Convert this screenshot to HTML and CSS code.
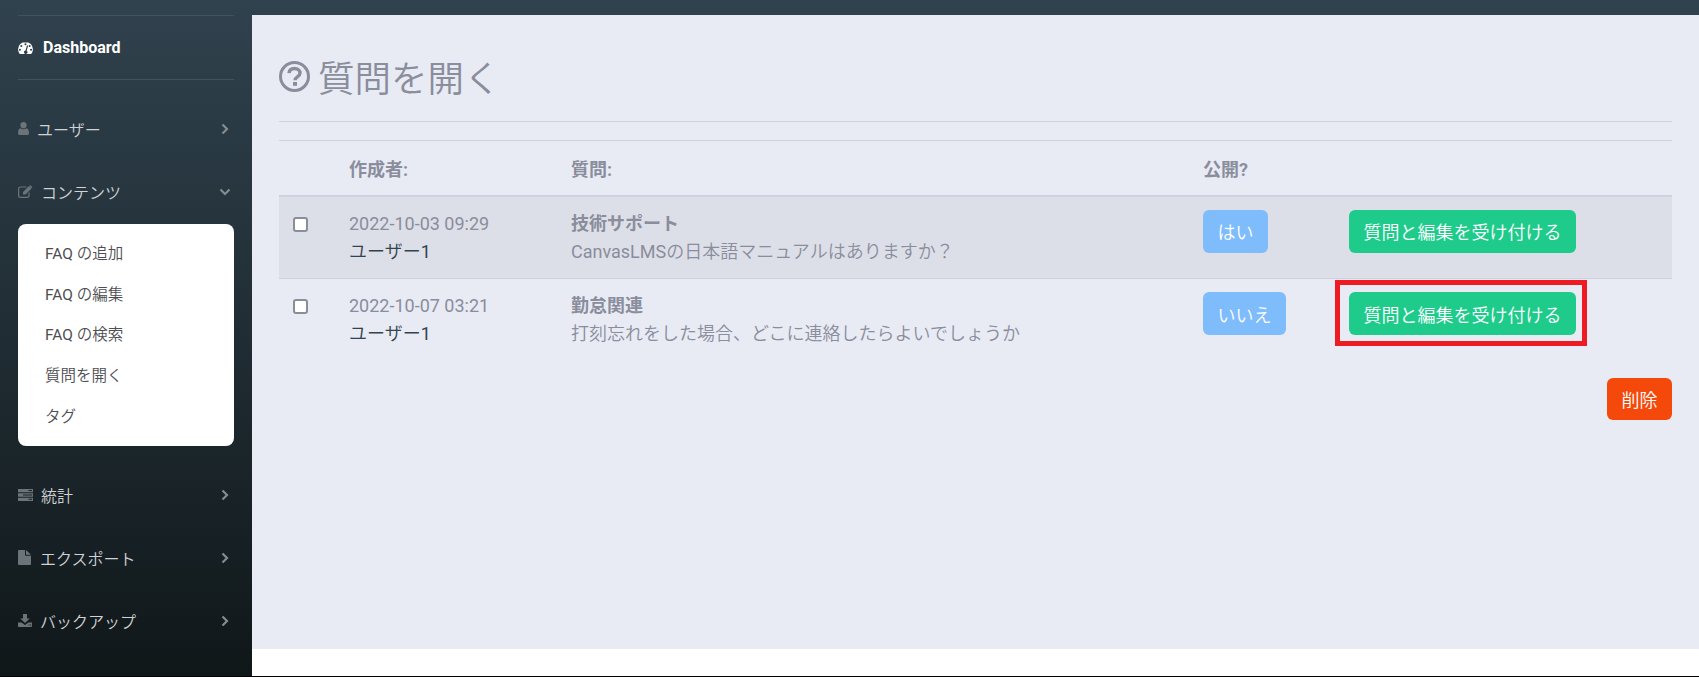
FILE: index.html
```html
<!DOCTYPE html>
<html lang="ja">
<head>
<meta charset="utf-8">
<title>質問を開く</title>
<link rel="stylesheet" href="styles.css">
</head>
<body>
<div class="app">
  <aside class="sidebar">
    <a class="dash">
      <svg class="dash-icon" viewBox="0 0 16 14"><path fill="currentColor" fill-rule="evenodd" d="M8 1a8 8 0 0 0-8 8c0 1.700.5 3.200 1.400 4.500.2.300.5.500.9.500h11.400c.4 0 .7-.2.9-.5.9-1.300 1.400-2.800 1.400-4.500a8 8 0 0 0-8-8zM8 2.300a1.100 1.100 0 1 1 0 2.200 1.100 1.100 0 0 1 0-2.200zM3.500 4.200a1.100 1.100 0 1 1 0 2.200 1.100 1.100 0 0 1 0-2.200zM12.500 4.200a1.100 1.100 0 1 1 0 2.200 1.100 1.100 0 0 1 0-2.200zM2 8.300a1.100 1.100 0 1 1 0 2.200 1.100 1.100 0 0 1 0-2.200zM14 8.300a1.100 1.100 0 1 1 0 2.200 1.100 1.100 0 0 1 0-2.200zM10.800 5l-1.500 5.600a1.800 1.800 0 1 1-1.300-.3L9.600 4.700z"/></svg>
      <span>Dashboard</span>
    </a>
    <nav class="nav">
      <a class="nav-item">
        <svg class="ico ico-user" viewBox="0 0 11 13"><circle cx="5.500" cy="3.200" r="3.100" fill="currentColor"/><path fill="currentColor" d="M0 11.300C0 8.500.8 6.500 2.500 6.200c.8.600 1.900 1 3 1s2.200-.4 3-1C10.200 6.500 11 8.500 11 11.300c0 1-.7 1.700-1.600 1.700H1.600C.7 13 0 12.300 0 11.300z"/></svg>
        <span class="label label-user">ユーザー</span>
        <svg class="chev" viewBox="0 0 8 12"><path d="M1.500 1.500 6 6l-4.500 4.500" fill="none" stroke="currentColor" stroke-width="2.200"/></svg>
      </a>
      <a class="nav-item open">
        <svg class="ico ico-edit" viewBox="0 0 15 13"><path fill="none" stroke="currentColor" stroke-width="1.200" d="M11 7.500v3A1.900 1.900 0 0 1 9.100 12.400H2.500A1.900 1.900 0 0 1 .6 10.500V3.900A1.900 1.900 0 0 1 2.500 2h6"/><path fill="currentColor" d="M5 7 11 1l2.500 2.500-6 6H5zM11.700.4c.3-.3.800-.3 1.100 0l1.300 1.300c.3.300.3.800 0 1.100l-.4.400-2.400-2.400z"/></svg>
        <span class="label">コンテンツ</span>
        <svg class="chev chev-down" viewBox="0 0 12 8"><path d="M1.500 1.500 6 6l4.500-4.500" fill="none" stroke="currentColor" stroke-width="2.200"/></svg>
      </a>
      <ul class="submenu">
        <li>FAQ の追加</li>
        <li>FAQ の編集</li>
        <li>FAQ の検索</li>
        <li>質問を開く</li>
        <li>タグ</li>
      </ul>
      <a class="nav-item">
        <svg class="ico ico-stats" viewBox="0 0 15 12"><path fill="currentColor" fill-rule="evenodd" d="M0 0h15v3.300H0zM10.500 1v1H14V1zM0 4.300h15v3.400H0zM0 8.700h15V12H0zM10.500 9.800v1H14v-1zM5 5.500v1h9v-1z"/></svg>
        <span class="label">統計</span>
        <svg class="chev" viewBox="0 0 8 12"><path d="M1.500 1.500 6 6l-4.500 4.500" fill="none" stroke="currentColor" stroke-width="2.200"/></svg>
      </a>
      <a class="nav-item">
        <svg class="ico ico-file" viewBox="0 0 13 15"><path fill="currentColor" d="M0 .8C0 .4.400 0 .8 0H7v4.700c0 .6.500 1 1 1h5v8.500c0 .4-.4.800-.8.800H.8c-.4 0-.8-.4-.8-.8zM8 0l5 4.800H8z"/></svg>
        <span class="label label-file">エクスポート</span>
        <svg class="chev" viewBox="0 0 8 12"><path d="M1.500 1.500 6 6l-4.500 4.500" fill="none" stroke="currentColor" stroke-width="2.200"/></svg>
      </a>
      <a class="nav-item">
        <svg class="ico ico-dl" viewBox="0 0 14 13"><path fill="currentColor" fill-rule="evenodd" d="M5 0h4v4.500h2.800L7 9 2.200 4.500H5zM0 8.500h3.500L7 11l3.500-2.500H14V12.200c0 .4-.4.800-.8.800H.8c-.4 0-.8-.4-.8-.8zM10.500 10.500v1h1v-1zM12.200 10.500v1h1v-1z"/></svg>
        <span class="label">バックアップ</span>
        <svg class="chev" viewBox="0 0 8 12"><path d="M1.500 1.500 6 6l-4.500 4.500" fill="none" stroke="currentColor" stroke-width="2.200"/></svg>
      </a>
    </nav>
  </aside>
  <div class="right">
    <main class="main">
      <h1 class="title">
        <svg class="title-icon" viewBox="0 0 31 31"><circle cx="15.500" cy="15.500" r="14" fill="none" stroke="currentColor" stroke-width="3"/><path fill="none" stroke="currentColor" stroke-width="3.400" d="M10 12.200c.3-3 2.500-4.700 5.500-4.700 3.200 0 5.500 1.900 5.500 4.500 0 4-5 3.700-5 7.300"/><rect x="14" y="21" width="4" height="3.800" fill="currentColor"/></svg>
        <span>質問を開く</span>
      </h1>
      <table class="table">
        <colgroup>
          <col class="c-check"><col class="c-author"><col class="c-question"><col class="c-public"><col class="c-action">
        </colgroup>
        <thead>
          <tr><th></th><th>作成者:</th><th>質問:</th><th>公開?</th><th></th></tr>
        </thead>
        <tbody>
          <tr class="shaded">
            <td><input class="check" type="checkbox"></td>
            <td><div class="date">2022-10-03 09:29</div><div class="user">ユーザー1</div></td>
            <td><div class="q-title">技術サポート</div><div class="q-body">CanvasLMSの日本語マニュアルはありますか？</div></td>
            <td><button class="btn btn-blue">はい</button></td>
            <td><button class="btn btn-green">質問と編集を受け付ける</button></td>
          </tr>
          <tr>
            <td><input class="check" type="checkbox"></td>
            <td><div class="date">2022-10-07 03:21</div><div class="user">ユーザー1</div></td>
            <td><div class="q-title">勤怠関連</div><div class="q-body">打刻忘れをした場合、どこに連絡したらよいでしょうか</div></td>
            <td><button class="btn btn-blue">いいえ</button></td>
            <td><button class="btn btn-green marked">質問と編集を受け付ける</button></td>
          </tr>
        </tbody>
      </table>
      <div class="actions"><button class="btn btn-red">削除</button></div>
    </main>
    <div class="foot"></div>
  </div>
</div>
</body>
</html>
```
FILE: styles.css
```css
* { box-sizing: border-box; }
html, body { margin: 0; padding: 0; height: 100%; overflow: hidden; }
body { font-family: Roboto, "Noto Sans CJK JP DemiLight", "Noto Sans CJK JP", sans-serif; }
.app {
  display: flex;
  height: 677px;
  border-bottom: 1px solid #000;
  background: linear-gradient(#30424e 0, #101719 100%);
}
.sidebar { width: 252px; flex: none; padding: 15px 18px 0; }
.dash {
  display: flex;
  align-items: center;
  gap: 10px;
  height: 65px;
  border-top: 1px solid #3f525e;
  border-bottom: 1px solid #3f525e;
  color: #fff;
  font-size: 16px;
  font-weight: 700;
}
.dash-icon { width: 15px; height: 13px; }
.nav { display: flex; flex-direction: column; padding-top: 17px; }
.nav-item {
  display: flex;
  align-items: center;
  height: 63px;
  color: #d0d3d5;
  font-size: 16px;
}
.nav-item .ico { color: #6b7479; flex: none; }
.label { margin-left: 8px; font-weight: 300; }
.label-file { margin-left: 9px; }
.ico-user { width: 11px; height: 13px; }
.ico-edit { width: 15px; height: 13px; }
.ico-stats { width: 15px; height: 12px; }
.ico-file { width: 13px; height: 15px; }
.ico-dl { width: 14px; height: 13px; }
.chev { width: 8px; height: 12px; margin-left: auto; margin-right: 5px; color: #858c90; }
.chev-down { width: 12px; height: 8px; margin-right: 3px; }
.submenu {
  list-style: none;
  margin: 1px 0 17px;
  padding: 10px 0 7px 27px;
  height: 222px;
  background: #fff;
  border-radius: 8px;
  color: #4e4e52;
  font-size: 15.500px;
}
.submenu li { height: 40.700px; line-height: 40.700px; }
.right { flex: 1; display: flex; flex-direction: column; padding-top: 15px; min-width: 0; }
.main { flex: 1; background: #e8ebf4; padding: 0 27px 0; }
.foot { height: 27px; background: #fff; }
.title {
  display: flex;
  align-items: center;
  gap: 8px;
  height: 107px;
  margin: 0;
  padding-top: 16px;
  border-bottom: 1px solid #cfd1e0;
  color: #8a8d9c;
  font-size: 36.500px;
  font-weight: 300;
}
.title-icon { width: 31px; height: 31px; }
.table {
  width: 100%;
  table-layout: fixed;
  border-collapse: collapse;
  margin-top: 18px;
  font-size: 18px;
  color: #8a8d9c;
}
.c-check { width: 56px; }
.c-author { width: 222px; }
.c-question { width: 632px; }
.c-public { width: 146px; }
thead tr { height: 55px; border-top: 1px solid #cfd1e0; border-bottom: 2px solid #cfd1e0; }
th { text-align: left; font-weight: 700; padding: 0 14px; font-family: Roboto, "Noto Sans CJK JP", sans-serif; }
td { padding: 13px 14px 0; vertical-align: top; height: 83px; }
tbody tr { border-bottom: 1px solid #cfd1e0; }
tbody tr:last-child { border-bottom: 0; }
.shaded { background: #dddfe8; }
.date, .user, .q-title, .q-body { line-height: 28px; white-space: nowrap; }
.user { color: #34444e; }
.q-title { font-weight: 700; font-family: Roboto, "Noto Sans CJK JP", sans-serif; }
.check {
  appearance: none;
  display: block;
  width: 15px;
  height: 15px;
  margin: 7px 0 0;
  background: #fff;
  border: 2px solid #8a8d9c;
  border-radius: 3px;
}
.btn {
  display: inline-block;
  height: 43px;
  padding: 0 14.500px;
  border: 0;
  border-radius: 6px;
  color: #fff;
  font: inherit;
  font-size: 18px;
  font-weight: 300;
  white-space: nowrap;
}
.btn-blue { background: #7fbcfb; }
.btn-green { background: #1ecb8b; }
.btn-red { background: #f4490b; height: 42px; }
.marked { position: relative; }
.marked::after {
  content: "";
  position: absolute;
  inset: -12px -11px -11px -14px;
  border: 5px solid #ed1c24;
}
.actions { display: flex; justify-content: flex-end; padding-top: 16px; }
```
